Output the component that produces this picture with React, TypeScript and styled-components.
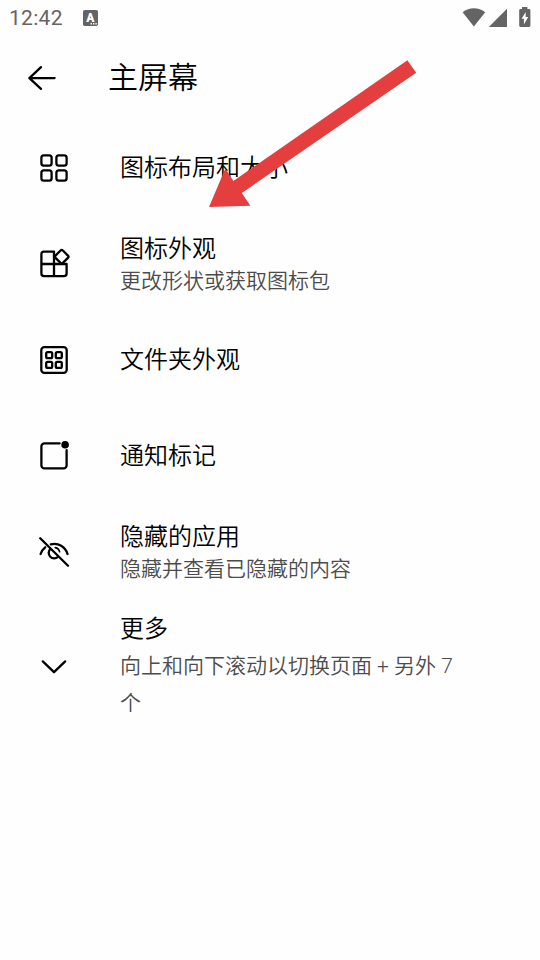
import type { ReactNode } from "react";
import styled, { createGlobalStyle } from "styled-components";

const GlobalStyle = createGlobalStyle`
  * {
    box-sizing: border-box;
  }

  body {
    margin: 0;
    background-color: #fefefe;
    color: #000;
    font-family: Roboto, "Noto Sans CJK SC", sans-serif;
  }
`;

const Screen = styled.div`
  position: relative;
  width: 540px;
  height: 960px;
  overflow: hidden;
  background-color: #fefefe;
`;

const StatusBar = styled.div`
  display: flex;
  justify-content: space-between;
  align-items: center;
  height: 36px;
  padding: 0 9px;
  color: #646464;
`;

const StatusGroup = styled.div`
  display: flex;
  align-items: center;
`;

const Clock = styled.span`
  width: 74px;
  padding-top: 1px;
  font-size: 21px;
  font-weight: 450;
  line-height: 35px;
  letter-spacing: 0.3px;
`;

const Header = styled.header`
  display: flex;
  align-items: center;
  height: 84px;
  padding-left: 24px;
`;

const BackButton = styled.button`
  display: flex;
  width: 36px;
  height: 36px;
  padding: 0;
  border: 0;
  background: none;
  color: inherit;
`;

const Title = styled.h1`
  margin: 0 0 0 48px;
  padding-bottom: 5px;
  font-size: 30px;
  font-weight: 350;
  line-height: 43px;
  font-family: "Noto Sans CJK SC", sans-serif;
`;

const List = styled.main`
  display: flex;
  flex-direction: column;
`;

const Row = styled.div<{ $tall?: boolean }>`
  display: flex;
  align-items: center;
  height: ${(props) => (props.$tall ? "133px" : "96px")};
  padding: 0 72px 0 36px;
`;

const IconSlot = styled.div`
  display: flex;
  flex: none;
  width: 84px;
`;

const RowText = styled.div`
  flex: 1;
`;

const Label = styled.div`
  padding-bottom: 4px;
  font-size: 24px;
  font-weight: 350;
  line-height: 30px;
  font-family: "Noto Sans CJK SC", sans-serif;
`;

const Summary = styled.div<{ $loose?: boolean }>`
  margin-top: ${(props) => (props.$loose ? "2px" : "0")};
  font-size: 21px;
  font-weight: 350;
  line-height: ${(props) => (props.$loose ? "37px" : "30px")};
  color: #4c4c4c;
`;

const StrokeIcon = styled.svg`
  display: block;
  width: 36px;
  height: 36px;
  fill: none;
  stroke: #000;
  stroke-width: 2.3;
  stroke-linecap: round;
  stroke-linejoin: round;
`;

const StatusIcon = styled.svg`
  display: block;
  fill: currentColor;
`;

const Pointer = styled.svg`
  position: absolute;
  left: 200px;
  top: 50px;
  fill: #e53e3e;
  pointer-events: none;
`;

const Icon = ({ children }: { children: ReactNode }) => (
  <StrokeIcon viewBox="0 0 36 36">{children}</StrokeIcon>
);

const GridIcon = () => (
  <Icon>
    <rect x="5.4" y="5.4" width="10.2" height="10.2" rx="2.4" />
    <rect x="20.4" y="5.4" width="10.2" height="10.2" rx="2.4" />
    <rect x="5.4" y="20.4" width="10.2" height="10.2" rx="2.4" />
    <rect x="20.4" y="20.4" width="10.2" height="10.2" rx="2.4" />
  </Icon>
);

const ShapesIcon = () => (
  <Icon>
    <path d="M18 18V5.6H8A2.6 2.6 0 0 0 5.4 8.2V27.6A2.6 2.6 0 0 0 8 30.2H28A2.6 2.6 0 0 0 30.6 27.6V18H5.4M18 18V30.2" />
    <rect x="20.5" y="5.5" width="10.4" height="10.4" rx="1.6" transform="rotate(45 25.7 10.7)" />
  </Icon>
);

const FolderIcon = () => (
  <Icon>
    <rect x="5.3" y="5.2" width="25.4" height="25.6" rx="3" />
    <rect x="10.2" y="10.1" width="6" height="6" rx="1.4" />
    <rect x="19.8" y="10.1" width="6" height="6" rx="1.4" />
    <rect x="10.2" y="19.9" width="6" height="6" rx="1.4" />
    <rect x="19.8" y="19.9" width="6" height="6" rx="1.4" />
  </Icon>
);

const BadgeIcon = () => (
  <Icon>
    <path d="M23.6 5.4H8.4A3 3 0 0 0 5.4 8.4V27.4A3 3 0 0 0 8.4 30.4H27.6A3 3 0 0 0 30.6 27.4V12.2" />
    <circle cx="29.1" cy="6.8" r="3.8" fill="#000" stroke="none" />
  </Icon>
);

const HiddenIcon = () => (
  <Icon>
    <path d="M4.2 4.2L32 31.8" />
    <path d="M4.6 20C5.4 17.3 7 15 9.2 13.3M14.8 10.3C22.4 8.6 29.4 12.6 31.5 20" />
    <path d="M14.3 15A5.4 5.4 0 1 0 22 22.7" />
    <path d="M19.2 13.6A5.4 5.4 0 0 1 23.6 17.8" strokeWidth="1.6" />
  </Icon>
);

const ChevronIcon = () => (
  <Icon>
    <path d="M6.8 12.4L18 23.2L29.2 12.4" />
  </Icon>
);

const rows = [
  { icon: <GridIcon />, label: "图标布局和大小" },
  { icon: <ShapesIcon />, label: "图标外观", summary: "更改形状或获取图标包" },
  { icon: <FolderIcon />, label: "文件夹外观" },
  { icon: <BadgeIcon />, label: "通知标记" },
  { icon: <HiddenIcon />, label: "隐藏的应用", summary: "隐藏并查看已隐藏的内容" },
  {
    icon: <ChevronIcon />,
    label: "更多",
    summary: "向上和向下滚动以切换页面 + 另外 7 个",
    tall: true,
  },
];

export default function App() {
  return (
    <>
      <GlobalStyle />
      <Screen>
        <StatusBar>
          <StatusGroup>
            <Clock>12:42</Clock>
            <StatusIcon width="15" height="16" viewBox="0 0 15 16">
              <rect width="15" height="16" rx="1.8" />
              <text
                x="7.3"
                y="11.8"
                fill="#fefefe"
                fontFamily="Roboto, sans-serif"
                fontSize="12"
                fontWeight="900"
                textAnchor="middle"
              >
                A
              </text>
              <path d="M7.6 13h1.4v1.4H7.6zM10 13h1.4v1.4H10zM12.4 13h1.4v1.4h-1.4z" fill="#fefefe" />
            </StatusIcon>
          </StatusGroup>

          <StatusGroup>
            <StatusIcon width="69" height="22" viewBox="0 0 69 22">
              <path d="M0.6 5.2C7.2 -0.1 16.6 -0.1 23.2 5.2L11.9 19.4Z" />
              <path d="M45 1.8V20H26.8Z" />
              <path
                fillRule="evenodd"
                d="M60 0H65.4V2H67A1.4 1.4 0 0 1 68.4 3.4V18.6A1.4 1.4 0 0 1 67 20H58.6A1.4 1.4 0 0 1 57.2 18.6V3.4A1.4 1.4 0 0 1 58.6 2H60ZM63.7 5L59.6 11.8H61.9V17.6L66.2 10H63.7Z"
              />
            </StatusIcon>
          </StatusGroup>
        </StatusBar>

        <Header>
          <BackButton aria-label="返回">
            <Icon>
              <path d="M30.6 18.1H5.4M17 7.1L5.4 18.1L17 28.9" />
            </Icon>
          </BackButton>
          <Title>主屏幕</Title>
        </Header>

        <List>
          {rows.map((row) => (
            <Row key={row.label} $tall={row.tall}>
              <IconSlot>{row.icon}</IconSlot>
              <RowText>
                <Label>{row.label}</Label>
                {row.summary && <Summary $loose={row.tall}>{row.summary}</Summary>}
              </RowText>
            </Row>
          ))}
        </List>

        <Pointer width="230" height="170" viewBox="0 0 230 170">
          <path d="M207.4 10.3L216.2 22.8L41.8 143L50.4 155.7L9 156.9L25.3 118.6L33.4 131Z" />
        </Pointer>
      </Screen>
    </>
  );
}
